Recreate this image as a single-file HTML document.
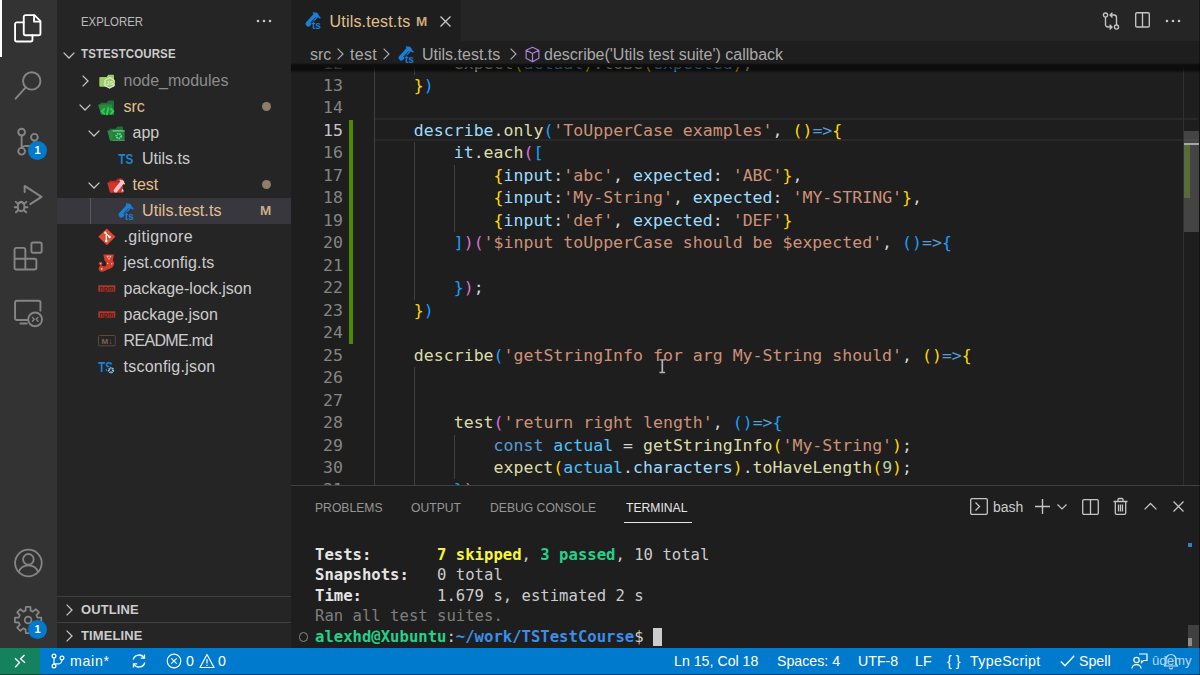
<!DOCTYPE html>
<html lang="en">
<head>
<meta charset="utf-8">
<title>Utils.test.ts - TSTestCourse - Visual Studio Code</title>
<style>
*{box-sizing:border-box;margin:0;padding:0}
html,body{width:1200px;height:675px;overflow:hidden;background:#1e1e1e}
body{position:relative;font-family:"Liberation Sans","DejaVu Sans",sans-serif;font-size:16px;color:#cccccc;-webkit-font-smoothing:antialiased}
.abs{position:absolute}
svg{display:block;overflow:visible}
/* activity bar */
#activity{left:0;top:0;width:57px;height:648px;background:#333333}
#activity .ind{left:0;top:0;width:2px;height:57px;background:#ffffff}
#activity svg{position:absolute}
.badge{position:absolute;width:19px;height:19px;border-radius:50%;background:#007acc;color:#fff;font-size:11px;font-weight:bold;text-align:center;line-height:19px}
/* sidebar */
#sidebar{left:57px;top:0;width:234px;height:648px;background:#252526}
#sidebar .title{left:24px;top:0.7px;height:41px;line-height:42px;font-size:13px;color:#bbbbbb;transform:scaleX(0.875);transform-origin:0 50%}
#sidebar .hdr{left:0;width:234px;height:26px;line-height:27px;font-size:13px;font-weight:bold;color:#cccccc}
#sidebar .hdr span{position:absolute;left:24px;letter-spacing:0.15px;transform-origin:0 50%;white-space:nowrap}
.row{position:absolute;left:0;width:234px;height:26px;line-height:26px;font-size:16px;color:#cccccc;white-space:nowrap}
.row .lbl{position:absolute;top:0.4px}
.row svg{position:absolute}
.mod{color:#e2c08d}
.dim{color:#8c8c8c}
/* editor */
#tabs{left:291px;top:0;width:909px;height:41px;background:#252526}
#tab{left:0;top:0;width:170px;height:41px;background:#1e1e1e}
#crumbs{left:291px;top:41px;width:909px;height:26px;background:#1e1e1e;font-size:16px;line-height:27px;color:#a9a9a9;white-space:nowrap}
#editor{left:291px;top:67px;width:909px;height:418px;background:#1e1e1e;overflow:hidden}
.ln,.cl{position:absolute;height:22.47px;line-height:22.47px;font-family:"DejaVu Sans Mono","Liberation Mono",monospace;font-size:16.56px;white-space:pre}
.ln{left:0;width:52px;text-align:right;color:#858585}
.cl{left:83px;color:#d4d4d4}
.v{color:#9cdcfe}.f{color:#dcdcaa}.s{color:#ce9178}.k{color:#569cd6}.c{color:#4fc1ff}.n{color:#b5cea8}
.b1{color:#ffd700}.b2{color:#da70d6}.b3{color:#179fff}
.guide{position:absolute;width:1px;background:#404040}
/* panel */
#panel{left:291px;top:485px;width:909px;height:163px;background:#1e1e1e;border-top:1px solid #414141}
.ptab{position:absolute;top:1px;height:42px;line-height:42px;font-size:13px;color:#969696;transform:scaleX(0.935);transform-origin:0 50%;white-space:nowrap}
.tl{position:absolute;left:24px;height:20.5px;line-height:20.5px;font-family:"DejaVu Sans Mono","Liberation Mono",monospace;font-size:15.6px;white-space:pre;color:#cccccc}
.tl b{font-weight:bold}
/* status */
#status{left:0;top:648px;width:1200px;height:27px;background:#007acc;color:#ffffff;font-size:14.2px;line-height:26px;white-space:nowrap}
#status .it{position:absolute;top:0}
#status svg{position:absolute}
</style>
</head>
<body>
<div id="activity" class="abs"><div class="ind abs"></div>
<svg style="left:14.3px;top:14.2px" width="28.4" height="28.4" viewBox="0 0 16 16" fill="none" stroke="#ffffff" stroke-width="1.05" stroke-linejoin="round" stroke-linecap="round"><path d="M5.5 4.7H1.6a1 1 0 0 0-1 1v8.8a1 1 0 0 0 1 1h7.8a1 1 0 0 0 1-1V12"/><path d="M6.5 0.6h5l3.4 3.4v7a1 1 0 0 1-1 1H6.5a1 1 0 0 1-1-1V1.6a1 1 0 0 1 1-1z"/><path d="M11.3 0.8v3.5h3.5"/></svg>
<svg style="left:14.3px;top:71.0px" width="28.4" height="28.4" viewBox="0 0 16 16" fill="none" stroke="#858585" stroke-width="1.08" stroke-linejoin="round" stroke-linecap="round"><circle cx="10" cy="5.6" r="4.9"/><path d="M6.6 9.2L0.9 15.6"/></svg>
<svg style="left:14.3px;top:127.8px" width="28.4" height="28.4" viewBox="0 0 16 16" fill="none" stroke="#858585" stroke-width="1.08" stroke-linejoin="round" stroke-linecap="round"><circle cx="4.3" cy="2.3" r="1.9"/><circle cx="4.3" cy="13.1" r="1.9"/><circle cx="11.5" cy="5.2" r="1.9"/><path d="M4.3 4.2v7M11.5 7.1v0.6a2.4 2.4 0 0 1-2.4 2.4H6.7a2.4 2.4 0 0 0-2.4 1.2"/></svg>
<svg style="left:14.3px;top:184.6px" width="28.4" height="28.4" viewBox="0 0 16 16" fill="none" stroke="#858585" stroke-width="1.08" stroke-linejoin="round" stroke-linecap="round"><path d="M6 4V0.500l9.500 6.200-6.300 4.100"/><ellipse cx="4" cy="12.300" rx="1.900" ry="2.500"/><path d="M2.300 10.600L1 9.500M5.700 10.600l1.300-1.100M2 12.500H0.400M6 12.500h1.600M2.400 14.200l-1.300 1.200M5.600 14.200l1.300 1.200M2.700 10.300a1.400 1.400 0 0 1 2.600 0"/></svg>
<svg style="left:14.3px;top:242.2px" width="28.4" height="28.4" viewBox="0 0 16 16" fill="none" stroke="#858585" stroke-width="1.08" stroke-linejoin="round" stroke-linecap="round"><path d="M0.300 4.300a1 1 0 0 1 1-1h4.100a1 1 0 0 1 1 1v5.100h5.200a1 1 0 0 1 1 1v4.100a1 1 0 0 1-1 1H1.300a1 1 0 0 1-1-1zM0.300 9.400h6.100v6.100"/><rect x="9.800" y="0.300" width="5.800" height="5.800" rx="1"/></svg>
<svg style="left:14.3px;top:300.2px" width="28.4" height="28.4" viewBox="0 0 16 16" fill="none" stroke="#858585" stroke-width="1.08" stroke-linejoin="round" stroke-linecap="round"><path d="M7.6 11.3H1.6a1 1 0 0 1-1-1V1.4a1 1 0 0 1 1-1h12.3a1 1 0 0 1 1 1V6"/><path d="M3.6 13.2h3.6"/><circle cx="11.9" cy="10.9" r="3.9"/><path d="M10.4 9.8l1 1.1-1 1.1M13.5 9.8l-1 1.1 1 1.1" stroke-width="0.8"/></svg>
<div class="badge" style="left:28px;top:141px">1</div>
<svg style="left:0;top:535px" width="57" height="57" viewBox="0 0 57 57" fill="none" stroke="#858585" stroke-width="1.8"><circle cx="28.4" cy="28" r="13.3"/><circle cx="28.4" cy="24.3" r="5.3"/><path d="M18.6 37.2a10.5 10.5 0 0 1 19.6 0"/></svg>
<svg style="left:0;top:592px" width="57" height="57" viewBox="0 0 57 57" fill="none" stroke="#858585" stroke-width="1.8" stroke-linejoin="round"><path d="M25.6 18.7 L25.8 14.8 L30.4 14.8 L30.6 18.7 L32.9 19.7 L35.8 17.1 L39.0 20.3 L36.4 23.2 L37.4 25.5 L41.3 25.7 L41.3 30.3 L37.4 30.5 L36.4 32.8 L39.0 35.7 L35.8 38.9 L32.9 36.3 L30.6 37.3 L30.4 41.2 L25.8 41.2 L25.6 37.3 L23.3 36.3 L20.4 38.9 L17.2 35.7 L19.8 32.8 L18.8 30.5 L14.9 30.3 L14.9 25.7 L18.8 25.5 L19.8 23.2 L17.2 20.3 L20.4 17.1 L23.3 19.7Z"/><circle cx="28.1" cy="28.0" r="3.4"/></svg>
<div class="badge" style="left:28px;top:619.5px">1</div>
</div>
<div id="sidebar" class="abs">
<div class="title abs">EXPLORER</div>
<svg class="abs" style="left:199px;top:19px" width="16" height="4" viewBox="0 0 16 4" fill="#c5c5c5"><circle cx="2" cy="2" r="1.3"/><circle cx="8" cy="2" r="1.3"/><circle cx="14" cy="2" r="1.3"/></svg>
<div class="hdr abs" style="top:40.400px"><span style="font-size:13.6px;transform:scaleX(0.845)">TSTESTCOURSE</span></div>
<svg class="abs" style="left:6px;top:51.8px" width="12" height="7" viewBox="0 0 12 7" fill="none" stroke="#c5c5c5" stroke-width="1.3"><path d="M0.6 0.6L6 6l5.4-5.4"/></svg>
<div class="row" style="top:68px"><svg style="left:42px;top:6px" width="18" height="18" viewBox="0 0 18 18"><path d="M1.3 3h6.3l1.700-2.200h4.700a1 1 0 0 1 1 1v10a1 1 0 0 1-1 1H1.300a1 1 0 0 1-1-1V4a1 1 0 0 1 1-1z" fill="#9ccc65"/><path d="M10.600 3.600l4.600 2.650v5.300l-4.600 2.650-4.600-2.650v-5.300z" fill="#9ccc65" stroke="#e4edd6" stroke-width="1.150"/><text x="10.700" y="11" font-size="5.600" font-weight="bold" fill="#e4edd6" text-anchor="middle" font-family="Liberation Sans,sans-serif">JS</text></svg><span class="lbl dim" style="left:66.5px;letter-spacing:0px">node_modules</span></div>
<svg class="abs" style="left:24.8px;top:74.5px" width="7" height="12" viewBox="0 0 7 12" fill="none" stroke="#c5c5c5" stroke-width="1.3"><path d="M0.6 0.6L6 6l-5.4 5.4"/></svg>
<div class="row" style="top:94px"><svg style="left:41px;top:6px" width="18" height="18" viewBox="0 0 18 18"><path d="M2.500 2.800h6.300l1.600-2.300h4.600a1 1 0 0 1 1 1v12h-13.500z" fill="#1f6f36"/><path d="M0.200 4.600h13.800l2.300 10.200H3.100z" fill="#2a8a42"/><path d="M6.800 8.300L3.900 11.300l2.900 3M12.400 8.300l2.900 3-2.900 3M10.500 7.300L8.700 15.200" stroke="#2fd050" stroke-width="1.700" fill="none"/></svg><span class="lbl mod" style="left:66.5px;letter-spacing:0px">src</span><div class="abs" style="left:205px;top:7.800px;width:9px;height:9px;border-radius:50%;background:#8f7d69"></div></div>
<svg class="abs" style="left:22px;top:103.8px" width="12" height="7" viewBox="0 0 12 7" fill="none" stroke="#c5c5c5" stroke-width="1.3"><path d="M0.6 0.6L6 6l5.4-5.4"/></svg>
<div class="row" style="top:120px"><svg style="left:49.5px;top:6.3px" width="19" height="18" viewBox="0 0 19 18"><path d="M2.500 2.800h6.300l1.600-2.300h4.600a1 1 0 0 1 1 1v12h-13.500z" fill="#1f6f36"/><path d="M0.200 4.600h13.800l2.300 10.200H3.100z" fill="#2a8a42"/><rect x="5.600" y="4.600" width="12" height="10" fill="#23803c"/><path d="M5.600 4.900h12" stroke="#b5e3bf" stroke-width="0.900"/><path d="M5.600 14.400h12" stroke="#7d8a80" stroke-width="0.800"/><circle cx="11.700" cy="10" r="2.300" fill="none" stroke="#62e58f" stroke-width="2" stroke-dasharray="1.300 0.770"/></svg><span class="lbl " style="left:75.5px;letter-spacing:0px">app</span></div>
<svg class="abs" style="left:31px;top:129.8px" width="12" height="7" viewBox="0 0 12 7" fill="none" stroke="#c5c5c5" stroke-width="1.3"><path d="M0.6 0.6L6 6l5.4-5.4"/></svg>
<div class="row" style="top:146px"><svg style="left:60.5px;top:5px" width="18" height="16" viewBox="0 0 18 16"><text x="0.300" y="13.200" font-size="14.200" font-weight="bold" fill="#1a82d2" textLength="15" lengthAdjust="spacingAndGlyphs" font-family="Liberation Sans,sans-serif">TS</text></svg><span class="lbl " style="left:85.0px;letter-spacing:0px">Utils.ts</span></div>
<div class="row" style="top:172px"><svg style="left:49.5px;top:6px" width="19" height="18" viewBox="0 0 19 18"><path d="M2.500 2.800h6.300l1.600-2.300h4.600a1 1 0 0 1 1 1v12h-13.500z" fill="#b52a22"/><path d="M0.200 4.600h13.800l2.300 10.200H3.100z" fill="#d2352a"/><path d="M13.200 2.200l4 3.600" stroke="#ffd0d0" stroke-width="1.500" stroke-linecap="round"/><path d="M15.300 4.200L8.700 12.400" stroke="#ffc4c4" stroke-width="4" stroke-linecap="round"/><path d="M15.600 10.500l1.300 3h-2.500z" fill="#ffe0e0"/></svg><span class="lbl mod" style="left:75.5px;letter-spacing:0px">test</span><div class="abs" style="left:205px;top:7.800px;width:9px;height:9px;border-radius:50%;background:#8f7d69"></div></div>
<svg class="abs" style="left:31px;top:181.8px" width="12" height="7" viewBox="0 0 12 7" fill="none" stroke="#c5c5c5" stroke-width="1.3"><path d="M0.6 0.6L6 6l5.4-5.4"/></svg>
<div class="row" style="top:198px;background:#37373d"><div class="abs" style="left:33px;top:0;width:1px;height:26px;background:#585858"></div><svg style="left:60px;top:4.5px" width="19" height="18" viewBox="0 0 19 18"><path d="M9.600 0.900l6.200 4.800" stroke="#1a7fd6" stroke-width="1.700" stroke-linecap="round"/><path d="M12 3.400L4.300 11.900" stroke="#1a7fd6" stroke-width="5.300" stroke-linecap="round"/><path d="M11.700 5.300L6.600 11" stroke="#37373d" stroke-width="1" opacity="0.800"/><text x="8" y="16.800" font-size="11.500" font-weight="bold" fill="#1a7fd6" stroke="#37373d" stroke-width="1.600" paint-order="stroke" textLength="9" lengthAdjust="spacingAndGlyphs" font-family="Liberation Sans,sans-serif">ts</text></svg><span class="lbl mod" style="left:85.0px;letter-spacing:0.1px">Utils.test.ts</span><span class="lbl" style="left:203px;font-size:13.5px;font-weight:bold;color:#c9ad83">M</span></div>
<div class="row" style="top:224px"><svg style="left:40.5px;top:4px" width="18" height="18" viewBox="0 0 18 18"><path d="M8.800 0.400L17.400 8.800 8.800 17.300 0.300 8.800z" fill="#e04a32"/><path d="M7.200 4.600l4.400 4.400M8.300 6v7.300" stroke="#fff" stroke-width="1.250" fill="none"/><circle cx="7.300" cy="4.700" r="1.150" fill="#fff"/><circle cx="11.700" cy="9" r="1.250" fill="#fff"/><circle cx="8.300" cy="13" r="1.250" fill="#fff"/></svg><span class="lbl " style="left:66.5px;letter-spacing:0.37px">.gitignore</span></div>
<div class="row" style="top:250px"><svg style="left:41px;top:3.5px" width="18" height="19" viewBox="0 0 18 19"><path d="M5.300 0.500H16l-1.200 5.700c1.400 1.400 1.700 3.300 1 5-1 2.400-3.300 3.400-5.800 4.100-2 .600-3.500 2.500-6.200 2.500-2 0-3.200-1.400-3.200-3 0-1.800 1.400-3 3-3 1.200 0 2 .600 2.700.600 1.300 0 2.100-1.200 2.100-2.400 0-1.400-.800-2.500-1.800-3.600z" fill="#d63c2c"/><circle cx="2.600" cy="9.600" r="1.800" fill="#d63c2c"/><path d="M2.600 11.200c0.300 1 1 1.800 2 2.200" stroke="#d63c2c" stroke-width="1.500" fill="none"/><path d="M8.300 1.800h5.200l-2.600 4.300z" fill="#f3d2cc"/><path d="M9.400 2.600h3l-1.500 2.400z" fill="#d63c2c"/><circle cx="3.700" cy="14.800" r="0.900" fill="#f3d2cc"/><circle cx="9.600" cy="9.400" r="0.700" fill="#f3d2cc"/><circle cx="13.700" cy="9.800" r="0.700" fill="#f3d2cc"/><circle cx="2.600" cy="9.600" r="0.600" fill="#f3d2cc"/></svg><span class="lbl " style="left:66.5px;letter-spacing:0.14px">jest.config.ts</span></div>
<div class="row" style="top:276px"><svg style="left:40.5px;top:8.5px" width="18" height="8" viewBox="0 0 18 8"><rect x="0.300" y="0.300" width="17" height="6.300" fill="#b0372b"/><text x="8.800" y="5.800" font-size="6.800" font-weight="bold" fill="#471712" text-anchor="middle" font-family="Liberation Sans,sans-serif">npm</text></svg><span class="lbl " style="left:66.5px;letter-spacing:0px">package-lock.json</span></div>
<div class="row" style="top:302px"><svg style="left:40.5px;top:8.5px" width="18" height="8" viewBox="0 0 18 8"><rect x="0.300" y="0.300" width="17" height="6.300" fill="#b0372b"/><text x="8.800" y="5.800" font-size="6.800" font-weight="bold" fill="#471712" text-anchor="middle" font-family="Liberation Sans,sans-serif">npm</text></svg><span class="lbl " style="left:66.5px;letter-spacing:0px">package.json</span></div>
<div class="row" style="top:328px"><svg style="left:40.5px;top:7px" width="18" height="12" viewBox="0 0 18 12"><rect x="0.500" y="0.500" width="16.800" height="10.300" rx="1" fill="none" stroke="#5e483c" stroke-width="1"/><text x="8.900" y="8.700" font-size="8" font-weight="bold" fill="#80604e" text-anchor="middle" font-family="Liberation Sans,sans-serif">M↓</text></svg><span class="lbl " style="left:66.5px;letter-spacing:-0.67px">README.md</span></div>
<div class="row" style="top:354px"><svg style="left:41px;top:5px" width="18" height="16" viewBox="0 0 18 16"><text x="0.300" y="13.200" font-size="14.200" font-weight="bold" fill="#1a82d2" textLength="14.500" lengthAdjust="spacingAndGlyphs" font-family="Liberation Sans,sans-serif">TS</text><circle cx="13" cy="11.300" r="3.900" fill="#252526"/><circle cx="13" cy="11.300" r="2.150" fill="none" stroke="#8fc8f5" stroke-width="2" stroke-dasharray="1.150 0.540"/></svg><span class="lbl " style="left:66.5px;letter-spacing:0.23px">tsconfig.json</span></div>
<div class="hdr abs" style="top:596px;border-top:1px solid #3f3f40;line-height:25.500px"><span style="font-size:13.600px;transform:scaleX(0.950)">OUTLINE</span></div>
<svg class="abs" style="left:9.3px;top:603.5px" width="7" height="12" viewBox="0 0 7 12" fill="none" stroke="#c5c5c5" stroke-width="1.3"><path d="M0.6 0.6L6 6l-5.4 5.4"/></svg>
<div class="hdr abs" style="top:622px;border-top:1px solid #3f3f40;line-height:25.500px"><span style="font-size:13.600px;transform:scaleX(0.950)">TIMELINE</span></div>
<svg class="abs" style="left:9.3px;top:629.5px" width="7" height="12" viewBox="0 0 7 12" fill="none" stroke="#c5c5c5" stroke-width="1.3"><path d="M0.6 0.6L6 6l-5.4 5.4"/></svg>
</div>
<div id="tabs" class="abs"><div id="tab" class="abs"></div>
<svg class="abs" style="left:13px;top:12px" width="19" height="18" viewBox="0 0 19 18"><path d="M9.600 0.900l6.200 4.800" stroke="#1a7fd6" stroke-width="1.700" stroke-linecap="round"/><path d="M12 3.400L4.300 11.900" stroke="#1a7fd6" stroke-width="5.300" stroke-linecap="round"/><path d="M11.700 5.300L6.600 11" stroke="#1e1e1e" stroke-width="1" opacity="0.800"/><text x="8" y="16.800" font-size="11.500" font-weight="bold" fill="#1a7fd6" stroke="#1e1e1e" stroke-width="1.600" paint-order="stroke" textLength="9" lengthAdjust="spacingAndGlyphs" font-family="Liberation Sans,sans-serif">ts</text></svg>
<div class="abs" style="left:38.500px;top:0.500px;height:41px;line-height:42px;font-size:16px;letter-spacing:0.200px;color:#e2c08d;white-space:nowrap">Utils.test.ts</div>
<div class="abs" style="left:124.800px;top:-0.500px;height:41px;line-height:43px;font-size:13px;font-weight:bold;color:#c9ab7e;transform:scaleX(1.040);transform-origin:0 50%">M</div>
<svg class="abs" style="left:148.500px;top:15.500px" width="11" height="11" viewBox="0 0 11 11" fill="none" stroke="#c5c5c5" stroke-width="1.400"><path d="M0.500 0.500l10 10M10.500 0.500l-10 10"/></svg>
<svg class="abs" style="left:811px;top:11px" width="19" height="19" viewBox="0 0 16 16" fill="none" stroke="#c5c5c5" stroke-width="1.150"><circle cx="2.950" cy="3.400" r="1.750"/><circle cx="12.200" cy="13.500" r="1.750"/><path d="M2.950 5.200V11.500a2 2 0 0 0 2 2h3.400M6.400 11.500l2 2-2 2M12.200 11.700V5.400a2 2 0 0 0-2-2H6.800M8.800 1.400l-2 2 2 2"/></svg>
<svg class="abs" style="left:843.800px;top:12.200px" width="15" height="16" viewBox="0 0 15 16" fill="none" stroke="#c5c5c5" stroke-width="1.350"><rect x="0.700" y="0.700" width="13.600" height="14.300" rx="1.300"/><path d="M7.500 0.700v14.300"/></svg>
<svg class="abs" style="left:874px;top:18.500px" width="16" height="4" viewBox="0 0 16 4" fill="#c5c5c5"><circle cx="2" cy="2" r="1.300"/><circle cx="8" cy="2" r="1.300"/><circle cx="14" cy="2" r="1.300"/></svg>
</div>
<div id="crumbs" class="abs">
<span class="abs" style="left:19px">src</span>
<svg class="abs" style="left:46px;top:7.200px" width="7" height="12" viewBox="0 0 7 12" fill="none" stroke="#a9a9a9" stroke-width="1.200"><path d="M0.600 0.600L6 6l-5.400 5.400"/></svg>
<span class="abs" style="left:59px;letter-spacing:0.300px">test</span>
<svg class="abs" style="left:92px;top:7.200px" width="7" height="12" viewBox="0 0 7 12" fill="none" stroke="#a9a9a9" stroke-width="1.200"><path d="M0.600 0.600L6 6l-5.400 5.400"/></svg>
<svg class="abs" style="left:105.500px;top:5.200px" width="19" height="18" viewBox="0 0 19 18"><path d="M9.600 0.900l6.200 4.800" stroke="#1a7fd6" stroke-width="1.700" stroke-linecap="round"/><path d="M12 3.400L4.300 11.900" stroke="#1a7fd6" stroke-width="5.300" stroke-linecap="round"/><path d="M11.700 5.300L6.600 11" stroke="#1e1e1e" stroke-width="1" opacity="0.800"/><text x="8" y="16.800" font-size="11.500" font-weight="bold" fill="#1a7fd6" stroke="#1e1e1e" stroke-width="1.600" paint-order="stroke" textLength="9" lengthAdjust="spacingAndGlyphs" font-family="Liberation Sans,sans-serif">ts</text></svg>
<span class="abs" style="left:131px">Utils.test.ts</span>
<svg class="abs" style="left:219px;top:7.200px" width="7" height="12" viewBox="0 0 7 12" fill="none" stroke="#a9a9a9" stroke-width="1.200"><path d="M0.600 0.600L6 6l-5.400 5.400"/></svg>
<svg class="abs" style="left:233px;top:5px" width="17" height="17" viewBox="0 0 16 16" fill="none" stroke="#b180d7" stroke-width="1.100" stroke-linejoin="round"><path d="M8 1.200l6 2.800v7.500l-6 3.300-6-3.300V4zM2 4l6 3 6-3M8 7v7.800"/></svg>
<span class="abs" style="left:253px">describe('Utils test suite') callback</span>
</div>
<div id="editor" class="abs">
<div class="abs" style="left:83px;top:51.339999999999996px;width:824px;height:22.47px;border-top:2px solid #282828;border-bottom:2px solid #282828"></div>
<div class="guide" style="left:83.0px;top:-14.47px;height:449.4px;background:#404040"></div>
<div class="guide" style="left:122.9px;top:-14.47px;height:22.47px;background:#404040"></div>
<div class="guide" style="left:122.9px;top:75.41px;height:157.29px;background:#404040"></div>
<div class="guide" style="left:162.8px;top:97.88px;height:67.41px;background:#404040"></div>
<div class="guide" style="left:122.9px;top:300.11px;height:134.82px;background:#404040"></div>
<div class="guide" style="left:162.8px;top:367.52px;height:44.94px;background:#404040"></div>
<div class="abs" style="left:58.3px;top:52.64px;width:3.8px;height:224.7px;background:#4c8a04"></div>
<div class="ln" style="top:-14.47px">12</div><div class="cl" style="top:-14.47px">        <span class="f">expect</span><span class="b1">(</span><span class="c">actual</span><span class="b1">)</span>.<span class="f">toBe</span><span class="b1">(</span><span class="c">expected</span><span class="b1">)</span>;</div>
<div class="ln" style="top:8.0px">13</div><div class="cl" style="top:8.0px">    <span class="b1">}</span><span class="b3">)</span></div>
<div class="ln" style="top:30.47px">14</div><div class="cl" style="top:30.47px"></div>
<div class="ln" style="top:52.94px;color:#c6c6c6">15</div><div class="cl" style="top:52.94px">    <span class="v">describe</span>.<span class="f">only</span><span class="b3">(</span><span class="s">'ToUpperCase examples'</span>, <span class="b1">()</span><span class="k">=&gt;</span><span class="b1">{</span></div>
<div class="ln" style="top:75.41px">16</div><div class="cl" style="top:75.41px">        <span class="v">it</span>.<span class="f">each</span><span class="b2">(</span><span class="b3">[</span></div>
<div class="ln" style="top:97.88px">17</div><div class="cl" style="top:97.88px">            <span class="b1">{</span><span class="v">input</span>:<span class="s">'abc'</span>, <span class="v">expected</span>: <span class="s">'ABC'</span><span class="b1">}</span>,</div>
<div class="ln" style="top:120.35px">18</div><div class="cl" style="top:120.35px">            <span class="b1">{</span><span class="v">input</span>:<span class="s">'My-String'</span>, <span class="v">expected</span>: <span class="s">'MY-STRING'</span><span class="b1">}</span>,</div>
<div class="ln" style="top:142.82px">19</div><div class="cl" style="top:142.82px">            <span class="b1">{</span><span class="v">input</span>:<span class="s">'def'</span>, <span class="v">expected</span>: <span class="s">'DEF'</span><span class="b1">}</span></div>
<div class="ln" style="top:165.29px">20</div><div class="cl" style="top:165.29px">        <span class="b3">]</span><span class="b2">)</span><span class="b2">(</span><span class="s">'$input toUpperCase should be $expected'</span>, <span class="b3">()</span><span class="k">=&gt;</span><span class="b3">{</span></div>
<div class="ln" style="top:187.76px">21</div><div class="cl" style="top:187.76px"></div>
<div class="ln" style="top:210.23px">22</div><div class="cl" style="top:210.23px">        <span class="b3">}</span><span class="b2">)</span>;</div>
<div class="ln" style="top:232.7px">23</div><div class="cl" style="top:232.7px">    <span class="b1">}</span><span class="b3">)</span></div>
<div class="ln" style="top:255.17px">24</div><div class="cl" style="top:255.17px"></div>
<div class="ln" style="top:277.64px">25</div><div class="cl" style="top:277.64px">    <span class="f">describe</span><span class="b3">(</span><span class="s">'getStringInfo for arg My-String should'</span>, <span class="b1">()</span><span class="k">=&gt;</span><span class="b1">{</span></div>
<div class="ln" style="top:300.11px">26</div><div class="cl" style="top:300.11px"></div>
<div class="ln" style="top:322.58px">27</div><div class="cl" style="top:322.58px"></div>
<div class="ln" style="top:345.05px">28</div><div class="cl" style="top:345.05px">        <span class="f">test</span><span class="b2">(</span><span class="s">'return right length'</span>, <span class="b3">()</span><span class="k">=&gt;</span><span class="b3">{</span></div>
<div class="ln" style="top:367.52px">29</div><div class="cl" style="top:367.52px">            <span class="k">const</span> <span class="c">actual</span> = <span class="f">getStringInfo</span><span class="b1">(</span><span class="s">'My-String'</span><span class="b1">)</span>;</div>
<div class="ln" style="top:389.99px">30</div><div class="cl" style="top:389.99px">            <span class="f">expect</span><span class="b1">(</span><span class="c">actual</span>.<span class="v">characters</span><span class="b1">)</span>.<span class="f">toHaveLength</span><span class="b1">(</span><span class="n">9</span><span class="b1">)</span>;</div>
<div class="ln" style="top:412.46px">31</div><div class="cl" style="top:412.46px">        <span class="b3">}</span><span class="b2">)</span></div>
<div class="abs" style="left:892px;top:0;width:1px;height:420px;background:#303030"></div>
<div class="abs" style="left:892.5px;top:63.7px;width:15.5px;height:101.3px;background:rgba(125,125,125,0.400)"></div>
<div class="abs" style="left:893px;top:78px;width:5.5px;height:53.2px;background:#586b3b"></div>
<div class="abs" style="left:893px;top:76px;width:15px;height:2.2px;background:#a6a6a6"></div>
<svg class="abs" style="left:367.500px;top:291.500px" width="7" height="15" viewBox="0 0 7 15" fill="none" stroke="#b4b4b4"><path d="M3.300 1v12.500" stroke-width="1.700"/><path d="M0.500 0.900h5.600M0.500 13.500h5.600" stroke-width="1.300"/></svg>
</div>
<div id="shadow" class="abs" style="left:291px;top:62.500px;width:909px;height:10.500px;background:linear-gradient(to bottom,rgba(0,0,0,0) 0%,rgba(0,0,0,0.500) 16%,rgba(0,0,0,0.620) 45%,rgba(0,0,0,0.550) 72%,rgba(0,0,0,0) 100%)"></div>
<div id="panel" class="abs">
<div class="ptab" style="left:24px">PROBLEMS</div>
<div class="ptab" style="left:120px">OUTPUT</div>
<div class="ptab" style="left:199px">DEBUG CONSOLE</div>
<div class="ptab" style="left:335px;color:#e7e7e7">TERMINAL</div>
<div class="abs" style="left:333px;top:35.5px;width:68px;height:1px;background:#e7e7e7"></div>
<svg class="abs" style="left:679px;top:11.8px" width="18" height="17" viewBox="0 0 18 17" fill="none" stroke="#c5c5c5" stroke-width="1.300"><rect x="0.700" y="0.700" width="16.600" height="15.600" rx="1.300"/><path d="M5.500 4.500l4 4-4 4"/></svg>
<div class="abs" style="left:702px;top:0px;height:42px;line-height:43px;font-size:14px;color:#cccccc">bash</div>
<svg class="abs" style="left:744px;top:12.8px" width="15" height="15" viewBox="0 0 15 15" fill="none" stroke="#c5c5c5" stroke-width="1.400"><path d="M7.500 0v15M0 7.500h15"/></svg>
<svg class="abs" style="left:766px;top:17.8px" width="10" height="6" viewBox="0 0 10 6" fill="none" stroke="#c5c5c5" stroke-width="1.200"><path d="M0.500 0.500L5 5l4.500-4.500"/></svg>
<svg class="abs" style="left:791px;top:12.8px" width="17" height="16" viewBox="0 0 17 16" fill="none" stroke="#c5c5c5" stroke-width="1.300"><rect x="0.700" y="0.700" width="15.600" height="14.600" rx="1.300"/><path d="M8.500 0.700v14.600"/></svg>
<svg class="abs" style="left:822px;top:11.8px" width="15" height="17" viewBox="0 0 15 17" fill="none" stroke="#c5c5c5" stroke-width="1.300"><path d="M0.500 3.500h14M5 3.500V1.500a1 1 0 0 1 1-1h3a1 1 0 0 1 1 1v2M2.300 3.500v11.500a1.300 1.300 0 0 0 1.300 1.300h7.800a1.300 1.300 0 0 0 1.300-1.300V3.500M5.500 6.500v7M7.500 6.500v7M9.500 6.500v7"/></svg>
<svg class="abs" style="left:853px;top:15.8px" width="13" height="8" viewBox="0 0 13 8" fill="none" stroke="#c5c5c5" stroke-width="1.300"><path d="M0.600 7.400L6.500 1.500l5.900 5.900"/></svg>
<svg class="abs" style="left:882px;top:14.8px" width="11" height="11" viewBox="0 0 11 11" fill="none" stroke="#c5c5c5" stroke-width="1.300"><path d="M0.500 0.500l10 10M10.500 0.500l-10 10"/></svg>
<div class="tl" style="top:58.85px"><b style="color:#e5e5e5">Tests:</b>       <b style="color:#f5f543">7 skipped</b>, <b style="color:#23d18b">3 passed</b>, 10 total</div>
<div class="tl" style="top:79.35px"><b style="color:#e5e5e5">Snapshots:</b>   0 total</div>
<div class="tl" style="top:99.85px"><b style="color:#e5e5e5">Time:</b>        1.679 s, estimated 2 s</div>
<div class="tl" style="top:120.35px"><span style="color:#7f7f7f">Ran all test suites.</span></div>
<div class="tl" style="top:140.85px"><b style="color:#23d18b">alexhd@Xubuntu</b>:<b style="color:#3b8eea">~/work/TSTestCourse</b>$ <span style="background:#cccccc;color:#cccccc">&nbsp;</span></div>
<div class="abs" style="left:7.5px;top:146px;width:9.5px;height:9.5px;border-radius:50%;border:1.300px solid #8a8a8a"></div>
<div class="abs" style="left:897.400px;top:57.300px;width:3.400px;height:3.500px;background:#3a7bc8"></div>
<div class="abs" style="left:897px;top:139px;width:11px;height:23px;background:#404040"></div>
<div class="abs" style="left:897px;top:152px;width:4px;height:7.500px;background:#8c8c8c"></div>
</div>
<div id="status" class="abs">
<div class="abs" style="left:1199px;top:-648px;width:1px;height:675px;background:rgba(0,0,0,0.400);z-index:5"></div>
<div class="abs" style="left:0;top:25.6px;width:1200px;height:2px;background:rgba(0,0,0,0.45);z-index:5"></div>
<div class="abs" style="left:0;top:0;width:40px;height:27px;background:#16825d"></div>
<svg class="abs" style="left:14px;top:6px" width="12" height="14" viewBox="0 0 12 14" fill="none" stroke="#fff" stroke-width="1.300"><path d="M1 4.300l4.500 4.200-4.300 4.700M10.500 1L6.500 4.800l4.500 4"/></svg>
<svg style="left:50px;top:5px" width="16" height="16" viewBox="0 0 16 16" fill="none" stroke="#fff" stroke-width="1.200"><circle cx="4" cy="3" r="1.900"/><circle cx="4" cy="13" r="1.900"/><circle cx="12" cy="5" r="1.900"/><path d="M4 4.900v6.200M12 6.900a4 4 0 0 1-4 4H6a2 2 0 0 0-2 1"/></svg>
<span class="it" style="left:70px;letter-spacing:0.700px">main*</span>
<svg style="left:131px;top:5px" width="16" height="16" viewBox="0 0 16 16" fill="none" stroke="#fff" stroke-width="1.300"><path d="M2.200 6.500a6 6 0 0 1 11-1.500M13.800 9.500a6 6 0 0 1-11 1.500"/><path d="M13.500 1.500v3.700h-3.700M2.500 14.500v-3.700h3.700"/></svg>
<svg style="left:166px;top:5px" width="16" height="16" viewBox="0 0 16 16" fill="none" stroke="#fff" stroke-width="1.200"><circle cx="8" cy="8" r="6.800"/><path d="M5.300 5.300l5.400 5.400M10.700 5.300l-5.400 5.400"/></svg>
<span class="it" style="left:186px">0</span>
<svg style="left:199px;top:5px" width="16" height="16" viewBox="0 0 16 16" fill="none" stroke="#fff" stroke-width="1.200" stroke-linejoin="round"><path d="M8 1.500L15 14.500H1z"/><path d="M8 6v4.500M8 11.800v1.200"/></svg>
<span class="it" style="left:218px">0</span>
<span class="it" style="left:674px">Ln 15, Col 18</span>
<span class="it" style="left:777px">Spaces: 4</span>
<span class="it" style="left:858px">UTF-8</span>
<span class="it" style="left:915px">LF</span>
<span class="it" style="left:947px">{ }</span>
<span class="it" style="left:970px;letter-spacing:0.350px">TypeScript</span>
<svg style="left:1060px;top:7px" width="15" height="12" viewBox="0 0 15 12" fill="none" stroke="#fff" stroke-width="1.400"><path d="M0.800 6.500l4.200 4.300L14.200 0.800"/></svg>
<span class="it" style="left:1079px">Spell</span>
<svg style="left:1131px;top:5px" width="17" height="17" viewBox="0 0 17 17" fill="none" stroke="#fff" stroke-width="1.200"><circle cx="5.500" cy="7" r="2.700"/><path d="M0.800 15.500a4.800 4.800 0 0 1 9.400 0M8 1h8v6.500h-3.500l-2 2v-2"/></svg>
<svg style="left:1163px;top:5px" width="16" height="17" viewBox="0 0 16 17" fill="none" stroke="#cfe3f5" stroke-width="1.200"><path d="M8 1.500a5 5 0 0 1 5 5v4l1.500 2.500h-13L3 10.500v-4a5 5 0 0 1 5-5zM6.500 14.500a1.500 1.500 0 0 0 3 0"/></svg>
<span class="it" style="left:1152px;color:#b4d6f2;font-size:13.200px;letter-spacing:0px">ûdemy</span>
</div>
</body>
</html>
